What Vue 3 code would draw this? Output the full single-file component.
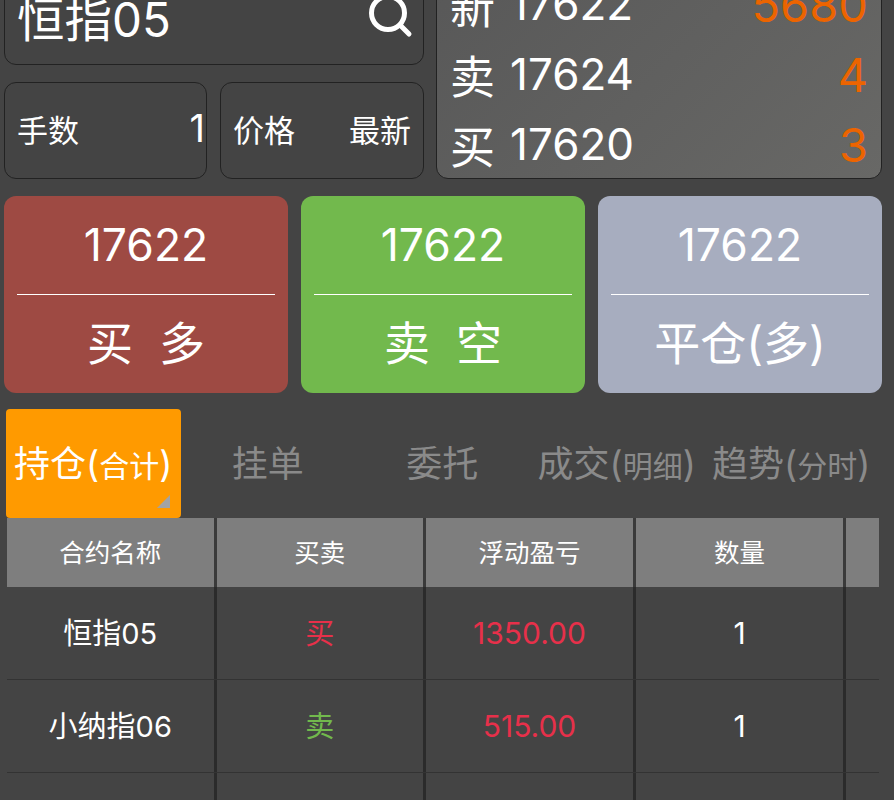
<template>
  <div class="page">
    <div class="top">
      <div class="left">
        <div class="search">
          <span class="search-name">恒指05</span>
          <svg class="search-icon" width="46" height="46" viewBox="0 0 46 46">
            <circle cx="20" cy="20" r="16.5" fill="none" stroke="#fff" stroke-width="5" />
            <path d="M32 32 L41 41" fill="none" stroke="#fff" stroke-width="5" stroke-linecap="round" />
          </svg>
        </div>
        <div class="fields">
          <div class="field lots-field">
            <span>手数</span>
            <span class="lots">1</span>
          </div>
          <div class="field">
            <span>价格</span>
            <span>最新</span>
          </div>
        </div>
      </div>
      <div class="quote">
        <div class="quote-row" v-for="q in quotes" :key="q.label">
          <span class="quote-label">{{ q.label }}</span>
          <span class="quote-price">{{ q.price }}</span>
          <span class="quote-vol">{{ q.vol }}</span>
        </div>
      </div>
    </div>

    <div class="actions">
      <div class="action" v-for="a in actions" :key="a.cls" :class="a.cls">
        <div class="action-price">17622</div>
        <div class="action-text">{{ a.text }}</div>
      </div>
    </div>

    <div class="tabs">
      <div class="tab" v-for="(t, index) in tabs" :key="t.name" :class="{ active: index === 0 }">
        {{ t.name }}<template v-if="t.sub">(<small>{{ t.sub }}</small>)</template>
      </div>
    </div>

    <div class="table">
      <div class="row head">
        <div class="cell" v-for="h in headers" :key="h">{{ h }}</div>
        <div class="cell"></div>
      </div>
      <div class="row body" v-for="r in rows" :key="r.id">
        <div class="cell name">{{ r.name }}</div>
        <div class="cell side" :class="r.sideCls">{{ r.side }}</div>
        <div class="cell num red">{{ r.pnl }}</div>
        <div class="cell num">{{ r.qty }}</div>
        <div class="cell"></div>
      </div>
    </div>
  </div>
</template>

<script setup>
const quotes = [
  { label: '新', price: '17622', vol: '5680' },
  { label: '卖', price: '17624', vol: '4' },
  { label: '买', price: '17620', vol: '3' }
]

const actions = [
  { cls: 'buy', text: '买 多' },
  { cls: 'sell', text: '卖 空' },
  { cls: 'close', text: '平仓(多)' }
]

const tabs = [
  { name: '持仓', sub: '合计' },
  { name: '挂单' },
  { name: '委托' },
  { name: '成交', sub: '明细' },
  { name: '趋势', sub: '分时' }
]

const headers = ['合约名称', '买卖', '浮动盈亏', '数量']

const rows = [
  { id: 1, name: '恒指05', side: '买', sideCls: 'red', pnl: '1350.00', qty: '1' },
  { id: 2, name: '小纳指06', side: '卖', sideCls: 'green', pnl: '515.00', qty: '1' },
  { id: 3, name: '', side: '', sideCls: '', pnl: '', qty: '' }
]
</script>

<style>
html,
body {
  height: 100%;
  overflow: hidden;
  background: #444444;
}
</style>

<style scoped>
.page {
  margin-top: -32px;
  width: 894px;
  height: 832px;
  overflow: hidden;
  color: #fff;
  font-family: Inter, "Noto Sans CJK SC", sans-serif;
}

.top {
  display: flex;
  gap: 12px;
  padding: 0 12px 0 4px;
}

.left {
  width: 420px;
  display: flex;
  flex-direction: column;
  gap: 17px;
}

.search {
  height: 97px;
  box-sizing: border-box;
  border: 1px solid #222;
  border-radius: 12px;
  display: flex;
  align-items: center;
  justify-content: space-between;
  padding: 0 9px 0 12px;
  font-size: 47.5px;
}

.search-icon {
  flex: none;
  margin-top: -2px;
}

.fields {
  display: flex;
  gap: 13px;
}

.field {
  flex: 1;
  height: 97px;
  box-sizing: border-box;
  border: 1px solid #222;
  border-radius: 12px;
  display: flex;
  align-items: center;
  justify-content: space-between;
  padding: 0 12px 5px 12px;
  font-size: 31px;
}

.lots-field {
  flex: none;
  width: 203px;
}

.lots {
  font-size: 38px;
  margin-right: -11px;
}

.quote {
  flex: 1;
  height: 211px;
  box-sizing: border-box;
  border: 1px solid #222;
  border-radius: 12px;
  background: linear-gradient(135deg, #585858, #686866);
  padding: 0 13px 0 13px;
}

.quote-row {
  height: 70px;
  display: flex;
  align-items: center;
  font-size: 45px;
}

.quote-price {
  font-size: 44px;
  margin-left: 15px;
}

.quote-vol {
  font-size: 47px;
  margin-left: auto;
  color: #ec6400;
}

.actions {
  display: flex;
  gap: 13px;
  padding: 17px 12px 0 4px;
}

.action {
  flex: 1;
  height: 197px;
  border-radius: 12px;
  padding: 0 13px;
  text-align: center;
}

.buy {
  background: #9e4a43;
}

.sell {
  background: #72b94d;
}

.close {
  background: #a7adbf;
}

.action-price {
  height: 98px;
  line-height: 98px;
  border-bottom: 1px solid #fff;
  font-size: 44.5px;
}

.action-text {
  height: 98px;
  line-height: 97px;
  font-size: 46px;
  word-spacing: 13px;
}

.tabs {
  display: flex;
  padding: 16px 0 0 6px;
}

.tab {
  width: 174.5px;
  height: 109px;
  line-height: 110px;
  text-align: center;
  font-size: 36px;
  color: #8a8a8a;
  white-space: nowrap;
}

.tab small {
  font-size: 30px;
}

.tab.active {
  position: relative;
  background: #ff9a00;
  color: #fff;
  border-radius: 4px;
}

.tab.active::after {
  content: "";
  position: absolute;
  right: 11px;
  bottom: 10px;
  width: 0;
  height: 0;
  border-style: solid;
  border-width: 0 0 13px 13px;
  border-color: transparent transparent #a3a3a3 transparent;
}

.table {
  padding-left: 7px;
  width: 872px;
}

.row {
  display: grid;
  grid-template-columns: 209.5px 209.5px 210px 210px 33px;
}

.cell {
  box-sizing: border-box;
  border-right: 3px solid #2b2b2b;
  display: flex;
  align-items: center;
  justify-content: center;
  padding-bottom: 5px;
}

.cell:last-child {
  border-right: none;
}

.head {
  height: 69px;
  background: #7e7e7e;
  font-size: 25.5px;
}

.head .cell {
  border-right-color: #3a3a3a;
}

.body {
  height: 92px;
  font-size: 29px;
  border-bottom: 1px solid #333;
}

.body .num {
  font-size: 30px;
  padding-bottom: 1px;
}

.red {
  color: #e7304a;
}

.green {
  color: #72b94d;
}
</style>
